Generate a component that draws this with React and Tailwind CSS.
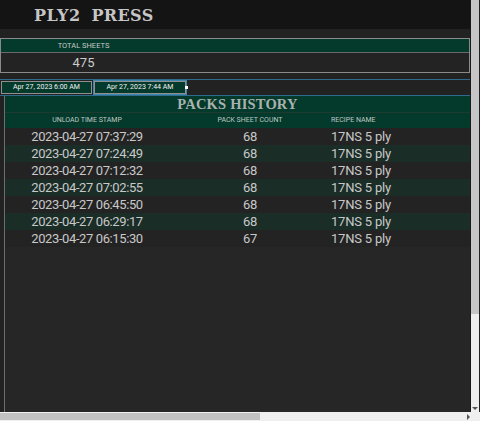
import React from 'react';

const rows = [
  { ts: '2023-04-27 07:37:29', count: 68, recipe: '17NS 5 ply' },
  { ts: '2023-04-27 07:24:49', count: 68, recipe: '17NS 5 ply' },
  { ts: '2023-04-27 07:12:32', count: 68, recipe: '17NS 5 ply' },
  { ts: '2023-04-27 07:02:55', count: 68, recipe: '17NS 5 ply' },
  { ts: '2023-04-27 06:45:50', count: 68, recipe: '17NS 5 ply' },
  { ts: '2023-04-27 06:29:17', count: 68, recipe: '17NS 5 ply' },
  { ts: '2023-04-27 06:15:30', count: 67, recipe: '17NS 5 ply' },
];

const sans = "font-[family-name:'Roboto','Noto_Sans',sans-serif]";

export default function App() {
  return (
    <div className={`w-[480px] h-[421px] flex flex-col overflow-hidden bg-[#222] ${sans}`}>
      <div className="flex flex-1 min-h-0">
        {/* report canvas */}
        <div className="w-[471px] flex flex-col bg-[#222] border-r border-[#1a1a1a]">
          <div className="h-[29px] shrink-0 bg-[#141414] pl-[34px] flex items-center">
            <h1 className="font-[family-name:'DejaVu_Serif','Courier_New',serif] font-bold text-[16px] leading-none tracking-[0.4px] [word-spacing:5px] text-[#c6c6c6] mt-[2px]">
              PLY2 PRESS
            </h1>
          </div>
          <div className="h-[9px] shrink-0" />

          {/* Total sheets card */}
          <div className="shrink-0 border border-[#8a8a8a]">
            <div className="h-[13px] bg-[#033a2b] grid grid-cols-[165px_1fr] items-center">
              <span className="text-center text-[7.5px] leading-none text-[#c9c9c9]">TOTAL SHEETS</span>
            </div>
            <div className="h-px bg-[#6a6a6a]" />
            <div className="h-[19px] bg-[#232323] grid grid-cols-[165px_1fr] items-center">
              <span className="text-center text-[13px] leading-none text-[#cccccc]">475</span>
            </div>
          </div>

          <div className="h-[6px] shrink-0" />

          {/* Date range slicer */}
          <div className="h-[17px] shrink-0 border-y border-[#2e6b8c] flex items-center gap-[2px] pl-px">
            <div className="w-[91px] h-[13px] border border-[#8f8f8f] bg-[#033a2b] flex items-center justify-center text-[7px] leading-none text-[#f2f2f2]">
              Apr 27, 2023 6:00 AM
            </div>
            <div className="relative w-[92px] h-[13px] border border-[#8f8f8f] outline outline-1 outline-[#3d86ad] bg-[#033a2b] flex items-center justify-center text-[7px] leading-none text-[#f2f2f2]">
              Apr 27, 2023 7:44 AM
              <span className="absolute -right-[3px] top-[4px] w-[3px] h-[3px] bg-white" />
            </div>
          </div>

          {/* Packs history table */}
          <div className="flex-1 min-h-0 ml-[4px] border-l border-[#6e6e6e] bg-[#262626] flex flex-col">
            <div className="h-[16px] shrink-0 bg-[#033a2b] flex items-center justify-center">
              <h2 className="font-[family-name:'Liberation_Serif','Times_New_Roman',serif] font-bold text-[14.5px] leading-none text-[#aab2ae] tracking-[0.2px]">
                PACKS HISTORY
              </h2>
            </div>
            <div className="h-px bg-[#1f3a30]" />
            <div className="h-[15px] shrink-0 bg-[#033a2b] grid grid-cols-[164px_162px_1fr] items-center text-[7px] leading-none text-[#bfc7c3]">
              <span className="text-center">UNLOAD TIME STAMP</span>
              <span className="text-center">PACK SHEET COUNT</span>
              <span>RECIPE NAME</span>
            </div>
            {rows.map((r, i) => (
              <div
                key={r.ts}
                className={`h-[17px] shrink-0 grid grid-cols-[164px_162px_1fr] items-center text-[13px] leading-none text-[#c8c8c8] tracking-[-0.4px] ${
                  i % 2 === 1 ? 'bg-[#1a2d27]' : 'bg-[#232323]'
                }`}
              >
                <span className="text-center">{r.ts}</span>
                <span className="text-center">{r.count}</span>
                <span className="tracking-[-0.2px]">{r.recipe}</span>
              </div>
            ))}
          </div>
        </div>

        {/* vertical scrollbar */}
        <div className="w-[8px] bg-[#efefef] flex flex-col">
          <div className="h-[314px] bg-[#c6c6c6]" />
          <div className="flex-1" />
          <div className="h-[8px] flex items-center justify-center">
            <span className="w-0 h-0 border-x-[3px] border-x-transparent border-t-[3px] border-t-[#555]" />
          </div>
        </div>
      </div>

      {/* horizontal scrollbar */}
      <div className="h-[9px] shrink-0 bg-[#efefef] flex items-center">
        <div className="w-[260px] h-[7px] bg-[#c2c2c2]" />
        <div className="flex-1" />
        <span className="mr-[10px] w-0 h-0 border-y-[3px] border-y-transparent border-l-[3px] border-l-[#555]" />
      </div>
    </div>
  );
}
